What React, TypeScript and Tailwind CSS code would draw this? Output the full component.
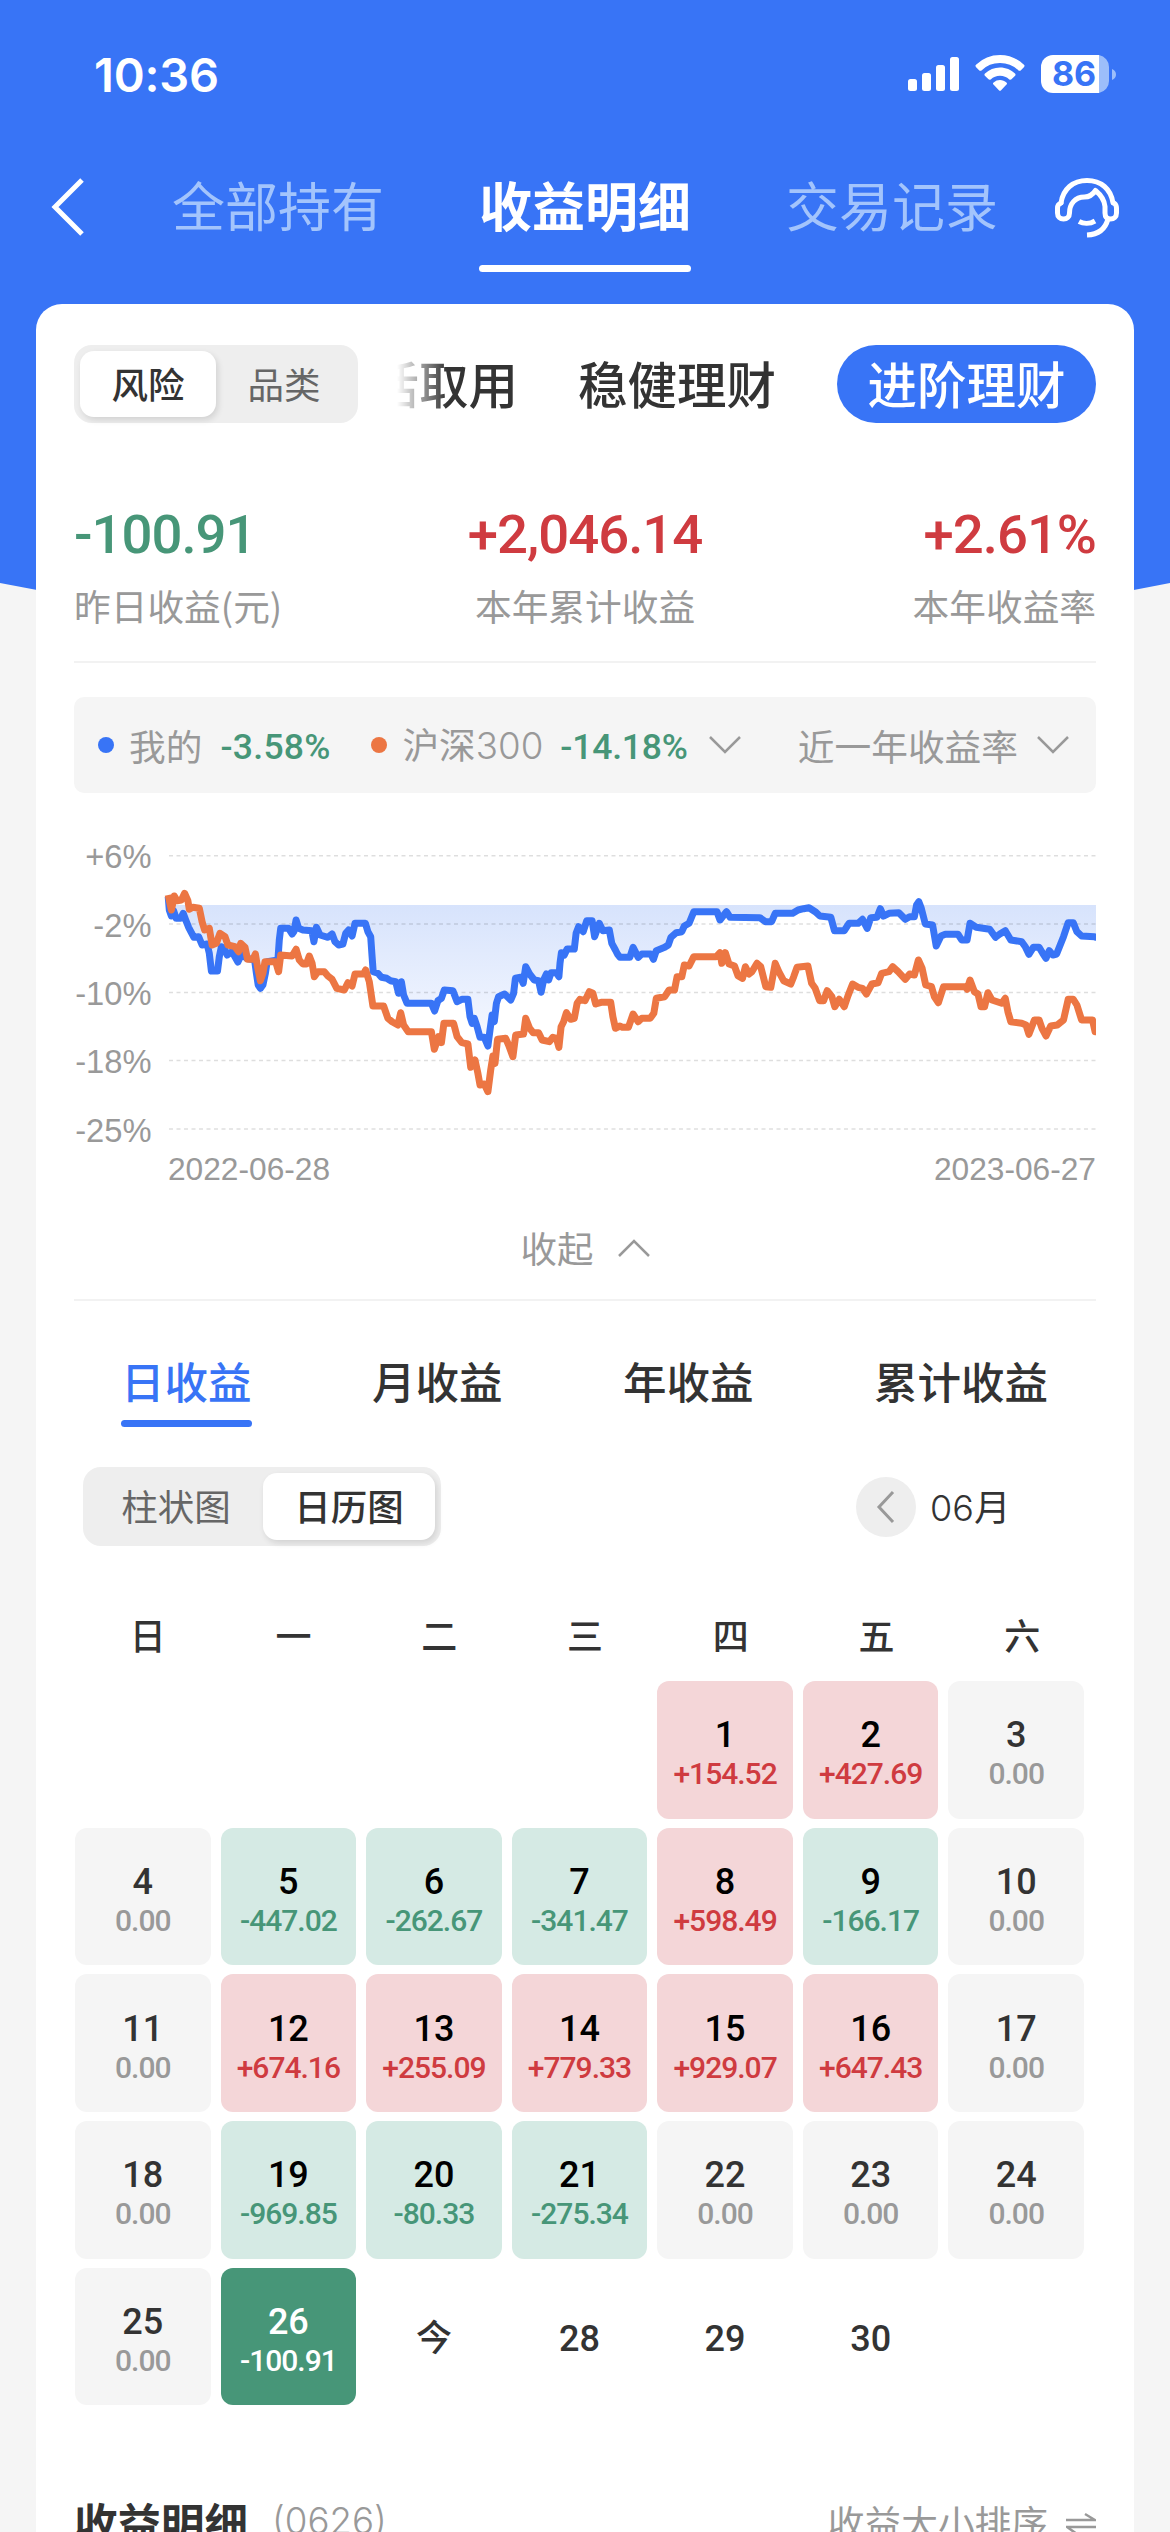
const tabs = ["日收益", "月收益", "年收益", "累计收益"];
const weekdays = ["日", "一", "二", "三", "四", "五", "六"];

type Day = { label: string; value?: string; selected?: boolean };

const days: (Day | null)[] = [
  null,
  null,
  null,
  null,
  { label: "1", value: "+154.52" },
  { label: "2", value: "+427.69" },
  { label: "3", value: "0.00" },
  { label: "4", value: "0.00" },
  { label: "5", value: "-447.02" },
  { label: "6", value: "-262.67" },
  { label: "7", value: "-341.47" },
  { label: "8", value: "+598.49" },
  { label: "9", value: "-166.17" },
  { label: "10", value: "0.00" },
  { label: "11", value: "0.00" },
  { label: "12", value: "+674.16" },
  { label: "13", value: "+255.09" },
  { label: "14", value: "+779.33" },
  { label: "15", value: "+929.07" },
  { label: "16", value: "+647.43" },
  { label: "17", value: "0.00" },
  { label: "18", value: "0.00" },
  { label: "19", value: "-969.85" },
  { label: "20", value: "-80.33" },
  { label: "21", value: "-275.34" },
  { label: "22", value: "0.00" },
  { label: "23", value: "0.00" },
  { label: "24", value: "0.00" },
  { label: "25", value: "0.00" },
  { label: "26", value: "-100.91", selected: true },
  { label: "今" },
  { label: "28" },
  { label: "29" },
  { label: "30" },
];

// Each series is stored in two halves, sampled at slightly different x steps
const mineA =
  "303,200 306,240 312,258 318,242 325,265 338,265 345,250 352,270 360,292 375,322 388,320 398,345 412,342 418,370 424,423 441,423 446,380 452,350 460,355 468,375 482,365 498,396 510,370 522,385 545,390 550,430 555,465 561,475 568,465 575,430 580,395 610,390 614,330 618,295 640,295 650,312 655,305 661,270 668,295 680,300 705,302 711,335 718,292 728,315 750,322 762,312 770,335 780,345 792,342 800,310 808,300 818,318 826,280 855,280 862,305 870,320 874,380 877,425 890,430 900,442 915,445 925,452 940,455 948,490 956,455 962,495 972,520 1040,520 1049,543 1058,512 1068,505 1076,480 1100,482 1112,515 1125,508 1142,508 1148,560 1154,580 1160,565 1168,590 1176,622 1188,622 1198,648 1204,600 1210,555 1216,575 1222,520 1228,500 1245,492 1262,510 1270,490 1275,445 1290,442 1297,460 1304,410 1315,432 1328,450 1340,452 1347,487 1354,450 1362,432 1368,450 1375,428 1390,428 1397,440 1400,400 1404,368 1412,375 1420,357 1440,357 1445,310 1452,290 1465,305 1475,272 1490,272 1497,320 1510,280 1520,302 1538,300 1545,340 1555,360";
const mineB =
  "48,372 55,382 82,382 91,352 105,382 115,372 140,372 147,388 155,362 178,352 188,345 195,322 210,308 225,305 232,288 245,280 258,245 322,245 330,270 348,245 358,262 440,263 455,275 472,275 482,250 530,250 545,240 560,236 575,233 592,245 605,258 635,262 645,302 672,302 685,280 710,280 722,268 735,295 745,263 762,262 771,236 780,258 795,250 822,248 840,268 852,260 865,260 871,225 877,215 884,235 895,282 915,285 925,348 938,318 950,313 985,313 995,330 1010,330 1018,280 1035,292 1072,298 1088,322 1100,312 1115,302 1130,330 1160,335 1170,350 1180,373 1192,352 1208,352 1218,370 1227,385 1236,362 1246,375 1256,372 1265,348 1275,320 1288,278 1302,278 1312,305 1325,318 1360,320 1367,323";
const indexA =
  "303,195 312,240 320,198 328,212 340,210 349,190 358,212 362,238 372,232 390,235 398,275 405,300 418,295 426,345 438,340 448,310 462,320 470,345 490,350 500,365 506,340 518,352 525,388 540,388 547,372 553,410 561,452 568,430 574,395 604,395 612,425 618,375 650,378 661,358 670,390 680,402 690,402 698,378 706,400 712,440 722,425 740,425 750,438 762,448 775,475 796,480 806,458 818,468 826,432 850,432 856,420 866,455 876,528 906,528 918,565 930,575 946,585 954,548 962,585 975,605 1040,605 1048,658 1060,620 1068,638 1075,580 1102,580 1112,620 1125,638 1142,642 1150,712 1162,690 1170,730 1176,765 1188,762 1198,785 1206,720 1212,678 1218,700 1225,628 1248,625 1256,645 1268,680 1276,615 1298,612 1304,565 1315,595 1325,608 1340,608 1350,630 1370,635 1380,622 1390,625 1397,652 1403,590 1410,575 1418,548 1430,568 1440,565 1448,520 1456,508 1470,512 1482,485 1492,490 1500,522 1515,517 1542,517 1548,560 1555,595";
const indexB =
  "55,588 62,592 78,592 91,552 105,575 115,565 138,565 148,550 155,505 178,500 190,480 205,480 212,440 225,440 232,405 245,408 258,380 320,380 330,368 335,400 345,368 355,402 370,408 380,438 392,445 400,410 410,432 418,425 432,400 442,410 456,470 470,472 482,400 492,425 505,452 525,462 533,440 542,412 572,408 582,460 592,475 604,512 615,512 625,482 638,500 646,530 658,508 672,530 682,498 695,462 710,472 722,475 733,492 748,462 765,458 775,430 795,425 805,410 820,425 840,448 852,432 865,435 876,390 886,415 896,465 912,470 920,500 931,518 945,470 1005,470 1010,478 1018,450 1030,485 1040,492 1048,530 1058,530 1067,488 1078,510 1105,520 1115,505 1122,545 1130,575 1160,580 1172,585 1180,613 1195,570 1208,570 1216,595 1227,618 1240,588 1258,585 1275,570 1288,508 1302,508 1312,525 1325,570 1355,570 1362,605 1367,605";

function toPoints(raw: string, step: number, offset: number) {
  return raw
    .split(" ")
    .map((p) => {
      const [x, y] = p.split(",").map(Number);
      return `${(x / step + offset).toFixed(1)},${(y / 3 - 10).toFixed(1)}`;
    })
    .join(" ");
}

const minePoints = `${toPoints(mineA, 2.8, -14)} ${toPoints(mineB, 2.751, 526)}`;
const indexPoints = `${toPoints(indexA, 2.8, -14)} ${toPoints(indexB, 2.751, 526)}`;

const gridLines = [
  { y: 15.7, label: "+6%" },
  { y: 84, label: "-2%" },
  { y: 152.5, label: "-10%" },
  { y: 220.5, label: "-18%" },
  { y: 289, label: "-25%" },
];

function StatusBar() {
  return (
    <div className="flex h-[148px] items-center justify-between pr-[53px] pl-[94px]">
      <span className="font-['Inter',sans-serif] text-[47px] leading-none font-semibold tracking-[-0.200px]">
        10:36
      </span>
      <svg width="210" height="40" viewBox="0 0 210 40" fill="white">
        <rect x="1" y="25" width="9" height="12" rx="2.5" />
        <rect x="15" y="19" width="9" height="18" rx="2.5" />
        <rect x="29" y="11" width="9" height="26" rx="2.5" />
        <rect x="43" y="3" width="9" height="34" rx="2.5" />
        <path d="M93 1c9.300 0 17.800 3.700 24 9.700.7.700.7 1.500.1 2.200l-3.400 3.500c-.6.600-1.500.6-2.200 0A26.500 26.500 0 0 0 93 9a26.500 26.500 0 0 0-18.500 7.400c-.7.600-1.600.6-2.200 0l-3.400-3.500c-.6-.7-.6-1.500.1-2.200A34.500 34.500 0 0 1 93 1Z" />
        <path d="M93 13.500c5.800 0 11.100 2.300 15 6 .7.700.7 1.500.1 2.200l-3.600 3.600c-.6.600-1.500.6-2.200.1a14 14 0 0 0-18.600 0c-.7.500-1.600.5-2.200-.1l-3.600-3.600c-.6-.7-.6-1.500.1-2.200a22 22 0 0 1 15-6Z" />
        <path d="M93 26c2.500 0 4.700.9 6.400 2.400.8.700.8 1.500.1 2.200l-5.400 5.600c-.7.700-1.500.7-2.200 0l-5.400-5.600c-.7-.7-.7-1.500.1-2.200A9.700 9.700 0 0 1 93 26Z" />
        <path d="M146 1h46v38h-46a12 12 0 0 1-12-12V13a12 12 0 0 1 12-12Z" />
        <path d="M192 1a12 12 0 0 1 10 12v14a12 12 0 0 1-10 12Z" fill="#9cbefa" />
        <path d="M205 15c2.700 1 4 3 4 5.500s-1.300 4.500-4 5.500Z" fill="#9cbefa" />
        <text
          x="167"
          y="32"
          textAnchor="middle"
          fill="#3874f6"
          className="font-['Inter',sans-serif] text-[34px] font-bold"
        >
          86
        </text>
      </svg>
    </div>
  );
}

function NavBar() {
  return (
    <div className="flex h-[156px] items-start pl-[50px] text-[53px] leading-none text-[#a3c4fc]">
      <svg className="mt-[30px]" width="36" height="58" viewBox="0 0 36 58" fill="none" stroke="white" strokeWidth="5">
        <path d="M32 2 5 29l27 27" />
      </svg>
      <span className="mt-[30px] ml-[86px]">全部持有</span>
      <div className="mt-[30px] ml-[95px] flex flex-col items-center">
        <span className="font-bold text-white">收益明细</span>
        <span className="mt-[34px] h-[7px] w-[212px] rounded-full bg-white" />
      </div>
      <span className="mt-[30px] ml-[95px]">交易记录</span>
      <svg
        className="mt-[28px] ml-[56px]"
        width="66"
        height="64"
        viewBox="0 0 66 64"
        fill="none"
        stroke="white"
        strokeWidth="5"
        strokeLinecap="round"
        strokeLinejoin="round"
      >
        <path d="M7 27C9 13 19 4.500 33 4.500S57 13 59 27" />
        <path d="M7 27c-2.500 1-3.500 2.500-3.500 5v5c0 4 2.500 6 6 6s6-2 6-6c0-9 5.500-16 15-16 5 0 8-2 11-6.500 6 5 9 10 9.500 16v6.500c0 4 2 6 5.500 6s6-2 6-6v-5c0-2.500-1-4-2.500-5" />
        <path d="M54 43c-2.500 9.500-9.500 15.500-21 16" strokeLinecap="butt" />
        <path d="M25 45.500c4.500 2.500 11 2.500 16-.5" strokeLinecap="butt" />
      </svg>
    </div>
  );
}

function Chevron({ up = false }: { up?: boolean }) {
  return (
    <svg width="32" height="20" viewBox="0 0 32 20" fill="none" stroke="#999" strokeWidth="2.500">
      <path d={up ? "M1 18 16 3l15 15" : "M1 2l15 15L31 2"} />
    </svg>
  );
}

function Total({ value, label, className }: { value: string; label: string; className: string }) {
  return (
    <div className={`flex flex-1 flex-col ${className}`}>
      <span className="font-['Roboto',sans-serif] text-[54.500px] leading-[62px] font-medium tracking-[-1px]">
        {value}
      </span>
      <span className="mt-[20px] text-[36.700px] leading-[40px] text-[#999]">{label}</span>
    </div>
  );
}

function Chart() {
  return (
    <svg className="mt-[47px] block" width="1022" height="350" viewBox="0 0 1022 350">
      <defs>
        <linearGradient id="loss" gradientUnits="userSpaceOnUse" x1="0" y1="65" x2="0" y2="215">
          <stop offset="0" stopColor="#d7e3fc" />
          <stop offset="1" stopColor="#f8faff" />
        </linearGradient>
        <clipPath id="belowZero">
          <rect x="94" y="65" width="928" height="240" />
        </clipPath>
      </defs>
      <polygon points={`94,65 ${minePoints} 1022,65`} fill="url(#loss)" clipPath="url(#belowZero)" />
      {gridLines.map((line) => (
        <g key={line.label}>
          <line
            x1="95"
            x2="1022"
            y1={line.y}
            y2={line.y}
            stroke="#000"
            strokeOpacity=".13"
            strokeWidth="1.500"
            strokeDasharray="4 3.500"
          />
          <text
            x="77.500"
            y={line.y + 12.5}
            textAnchor="end"
            fill="#999"
            className="font-['Liberation_Sans',sans-serif] text-[32.700px]"
          >
            {line.label}
          </text>
        </g>
      ))}
      <g fill="none" strokeWidth="7" strokeLinejoin="round">
        <polyline points={minePoints} stroke="#3874f6" />
        <polyline points={indexPoints} stroke="#ec7643" />
      </g>
      <g fill="#999" className="font-['Liberation_Sans',sans-serif] text-[31.700px]">
        <text x="94" y="340">
          2022-06-28
        </text>
        <text x="1022" y="340" textAnchor="end">
          2023-06-27
        </text>
      </g>
    </svg>
  );
}

function DayCell({ day }: { day: Day | null }) {
  if (!day) return <div />;

  let cell = "pt-[4px] text-[#333]";
  let amount = "";
  if (day.selected) {
    cell = "pt-[8px] bg-[#479678] text-white";
    amount = "text-white";
  } else if (day.value?.startsWith("+")) {
    cell = "pt-[8px] bg-[#f4d6d8] text-black";
    amount = "text-[#cf3b40]";
  } else if (day.value?.startsWith("-")) {
    cell = "pt-[8px] bg-[#d5eae4] text-black";
    amount = "text-[#479678]";
  } else if (day.value) {
    cell = "pt-[8px] bg-[#f5f5f5] text-[#333]";
    amount = "text-[#999]";
  }

  return (
    <div
      className={`flex h-[137.500px] flex-col items-center justify-center rounded-[12px] font-['Roboto','Noto_Sans_CJK_SC',sans-serif] font-medium ${cell}`}
    >
      <span className="text-[36px] leading-[40px]">{day.label}</span>
      {day.value && (
        <span className={`text-[30px] leading-[37px] tracking-[-1px] ${amount}`}>{day.value}</span>
      )}
    </div>
  );
}

export default function App() {
  return (
    <div className="relative h-[2532px] w-[1170px] overflow-hidden bg-[#f5f5f5] font-['Noto_Sans_CJK_SC',sans-serif] text-[#333]">
      <svg className="absolute top-0 left-0" width="1170" height="660" viewBox="0 0 1170 660">
        <path d="M0 0H1170V583Q585 700 0 583Z" fill="#3874f6" />
      </svg>

      <div className="relative text-white">
        <StatusBar />
        <NavBar />
      </div>

      <main className="relative mx-[36px] h-[2300px] rounded-t-[26px] bg-white px-[38px] pt-[41px]">
        {/* Risk / category filter */}
        <div className="flex h-[78px] items-center">
          <div className="flex h-[78px] w-[284px] items-center rounded-[18px] bg-[#eee] p-[6px] text-[36.500px] leading-none">
            <div className="flex h-[66px] w-[136px] items-center justify-center rounded-[14px] bg-white font-medium shadow-[2px_3px_6px_rgba(0,0,0,0.12)]">
              风险
            </div>
            <div className="flex-1 text-center text-[#666]">品类</div>
          </div>
          <div className="ml-[39px] flex w-[121px] justify-end overflow-hidden pb-[3px] text-[49.500px] leading-[64px] font-medium whitespace-nowrap [mask-image:linear-gradient(to_right,transparent,black_50px)]">
            灵活取用
          </div>
          <span className="ml-[60px] pb-[3px] text-[49.500px] leading-none font-medium">稳健理财</span>
          <div className="ml-auto flex h-[78px] w-[259px] items-center justify-center rounded-full bg-[#3874f6] pb-[3px] text-[49.500px] leading-none font-medium text-white">
            进阶理财
          </div>
        </div>

        {/* Totals */}
        <div className="mt-[80px] flex">
          <Total value="-100.91" label="昨日收益(元)" className="items-start text-[#479678]" />
          <Total value="+2,046.14" label="本年累计收益" className="items-center text-[#cf3b40]" />
          <Total value="+2.61%" label="本年收益率" className="items-end text-[#cf3b40]" />
        </div>
        <div className="mt-[36px] h-[2px] bg-[#f2f2f2]" />

        {/* Legend */}
        <div className="mt-[34px] flex h-[96px] items-center rounded-[10px] bg-[#f5f5f5] pl-[24px] text-[36.700px] leading-none text-[#999]">
          <span className="size-[16px] rounded-full bg-[#3874f6]" />
          <span className="ml-[15px]">我的</span>
          <span className="ml-[18px] w-[113px] pt-[5px] font-['Roboto',sans-serif] text-[35.500px] font-medium tracking-[0.300px] text-[#479678]">
            -3.58%
          </span>
          <span className="ml-[38px] size-[16px] rounded-full bg-[#ec7643]" />
          <span className="ml-[15px]">
            沪深<span className="font-['Inter',sans-serif] font-light">300</span>
          </span>
          <span className="mr-auto ml-[17px] pt-[5px] font-['Roboto',sans-serif] text-[35.500px] font-medium tracking-[-0.200px] text-[#479678]">
            -14.18%
          </span>
          <Chevron />
          <span className="ml-[57px]">近一年收益率</span>
          <span className="mr-[27px] ml-[19px]">
            <Chevron />
          </span>
        </div>

        <Chart />

        <div className="mt-[38px] flex h-[40px] items-center justify-center gap-[24px] text-[36.500px] leading-none text-[#999]">
          收起
          <Chevron up />
        </div>
        <div className="mt-[31px] h-[2px] bg-[#f2f2f2]" />

        {/* Period tabs */}
        <div className="mt-[48px] flex h-[80px] justify-between pr-[48px] pl-[47px] text-[43.500px] leading-[64px] font-medium">
          {tabs.map((tab, i) => (
            <div key={tab} className={i === 0 ? "flex flex-col text-[#3874f6]" : ""}>
              {tab}
              {i === 0 && <span className="mt-[7px] h-[7px] rounded-full bg-[#3874f6]" />}
            </div>
          ))}
        </div>

        <div className="mt-[38px] flex items-center pl-[9px] text-[36.500px] leading-none">
          <div className="flex h-[79px] w-[358px] items-center rounded-[18px] bg-[#eee] p-[6px]">
            <div className="flex-1 text-center text-[#666]">柱状图</div>
            <div className="flex h-[67px] w-[172px] items-center justify-center rounded-[14px] bg-white font-medium shadow-[2px_3px_6px_rgba(0,0,0,0.12)]">
              日历图
            </div>
          </div>
          <div className="ml-[415px] flex size-[60px] items-center justify-center rounded-full bg-[#eee]">
            <svg width="20" height="34" viewBox="0 0 20 34" fill="none" stroke="#999" strokeWidth="3">
              <path d="M17 2 3 17l14 15" />
            </svg>
          </div>
          <span className="ml-[14px]">
            <span className="font-['Inter',sans-serif] text-[36px] font-light">06</span>月
          </span>
        </div>

        {/* Calendar */}
        <div className="mt-[66px] ml-px grid w-[1020px] grid-cols-7 text-center text-[36px] leading-[44px] font-medium">
          {weekdays.map((day) => (
            <span key={day}>{day}</span>
          ))}
        </div>
        <div className="mt-[25px] ml-px grid w-[1009px] grid-cols-7 gap-x-[10px] gap-y-[9.200px]">
          {days.map((day, i) => (
            <DayCell key={i} day={day} />
          ))}
        </div>

        {/* Detail list heading */}
        <div className="mt-[86px] flex h-[60px] items-center text-[36.700px] leading-none text-[#999]">
          <span className="text-[43.500px] font-bold text-[#333]">收益明细</span>
          <span className="ml-[24px] font-['Inter',sans-serif] text-[36.700px] font-light">(0626)</span>
          <span className="ml-auto">收益大小排序</span>
          <svg
            className="mt-[4px] ml-[18px]"
            width="30"
            height="24"
            viewBox="0 0 30 24"
            fill="none"
            stroke="#999"
            strokeWidth="2.500"
          >
            <path d="M0 9h29l-10-6M30 16H1l10 7" />
          </svg>
        </div>
      </main>
    </div>
  );
}
